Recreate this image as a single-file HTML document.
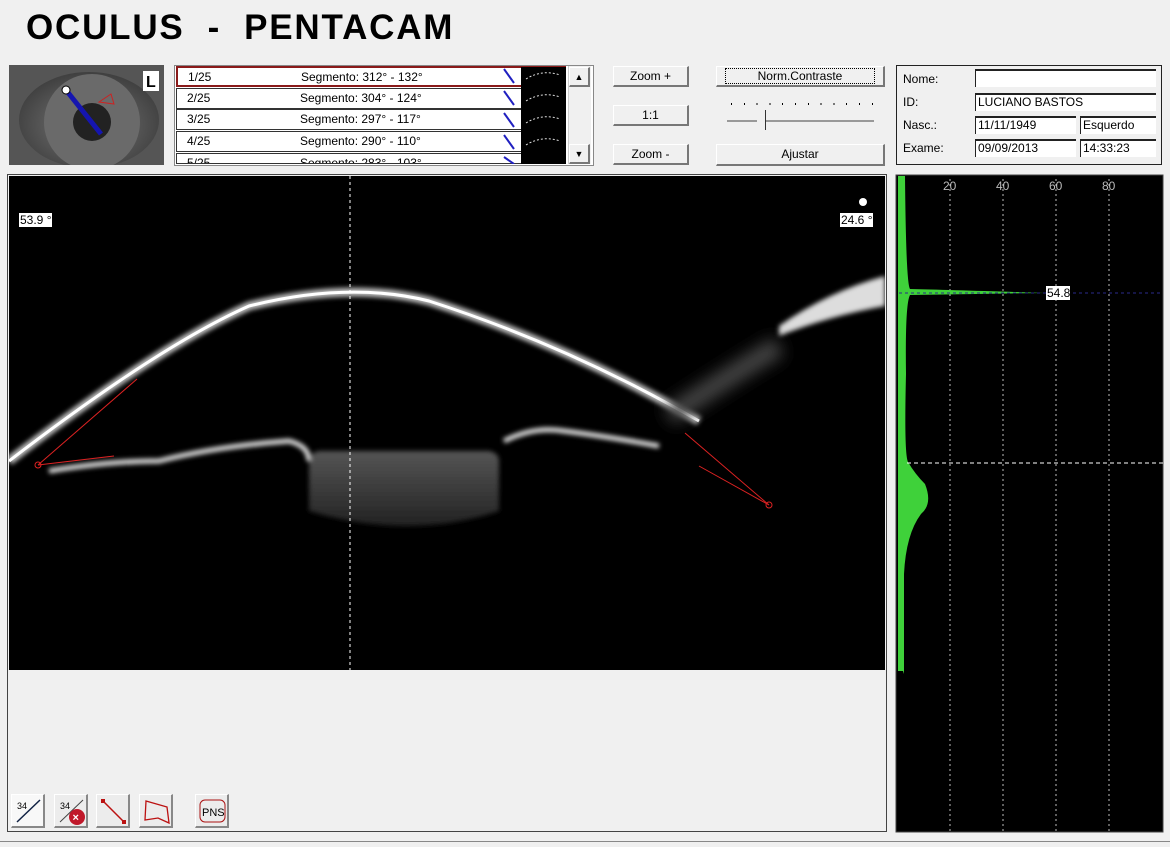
<!DOCTYPE html><html><head><style>
body{margin:0;width:1170px;height:847px;background:#f0f0f0;position:relative;overflow:hidden;font-family:"Liberation Sans",sans-serif;}
.a{position:absolute}
.btn{position:absolute;background:#f0f0f0;border:1px solid #fff;border-right:2px solid #777;border-bottom:2px solid #777;font-size:12px;text-align:center;box-sizing:border-box;line-height:18px;color:#000}
.row{position:absolute;left:176px;width:390px;height:21px;background:#fff;border:1px solid #333;box-sizing:border-box;font-size:12px;line-height:19px}
.row span{position:absolute}
.lbl{position:absolute;font-size:12px}
.fld{position:absolute;background:#fff;border-top:2px solid #222;border-left:1px solid #222;box-sizing:border-box;font-size:12px;line-height:15px;padding-left:2px;height:18px}
.ib{position:absolute;top:794px;width:34px;height:34px;background:#ececec;border:1px solid #fff;border-right:2px solid #888;border-bottom:2px solid #888;box-sizing:border-box}
</style></head><body>
<div class="a" style="left:26px;top:8px;font-size:35px;font-weight:bold;letter-spacing:1.8px">OCULUS&nbsp;&nbsp;-&nbsp;&nbsp;PENTACAM</div>
<!-- eye thumb -->
<svg class="a" style="left:9px;top:65px" width="155" height="100"><defs><radialGradient id="e" cx="0.5" cy="0.55" r="0.6"><stop offset="0" stop-color="#7a7a7a"/><stop offset="1" stop-color="#3a3a3a"/></radialGradient></defs>
<rect width="155" height="100" fill="#555"/><ellipse cx="80" cy="55" rx="70" ry="48" fill="url(#e)"/><circle cx="83" cy="57" r="48" fill="#6a6a6a"/><circle cx="83" cy="57" r="19" fill="#222"/>
<line x1="57" y1="25" x2="92" y2="69" stroke="#1515b0" stroke-width="5"/><circle cx="57" cy="25" r="4" fill="#fff" stroke="#000"/><path d="M90 37 l12 -8 l3 10 z" fill="none" stroke="#c22"/>
<rect x="134" y="6" width="16" height="20" fill="#fff"/><text x="137" y="22" font-size="16" font-weight="bold" font-family="Liberation Sans">L</text></svg>
<!-- list -->
<div class="a" style="left:174px;top:65px;width:418px;height:99px;background:#fff;border:1px solid #888;overflow:hidden"></div>
<div class="row" style="top:66px;border:2px solid #8a1a1a"><span style="left:10px">1/25</span><span style="left:123px">Segmento: 312° - 132°</span></div>
<div class="row" style="top:88px"><span style="left:10px">2/25</span><span style="left:123px">Segmento: 304° - 124°</span></div>
<div class="row" style="top:109px"><span style="left:10px">3/25</span><span style="left:123px">Segmento: 297° - 117°</span></div>
<div class="row" style="top:131px"><span style="left:10px">4/25</span><span style="left:123px">Segmento: 290° - 110°</span></div>
<div class="row" style="top:153px;height:11px;overflow:hidden"><span style="left:10px">5/25</span><span style="left:123px">Segmento: 283° - 103°</span></div>
<div class="a" style="left:521px;top:67px;width:45px;height:97px;background:#000"></div>
<svg class="a" style="left:500px;top:67px" width="66" height="97"><g stroke="#2020c0" stroke-width="2"><line x1="4" y1="2" x2="14" y2="16"/><line x1="4" y1="24" x2="14" y2="38"/><line x1="4" y1="46" x2="14" y2="60"/><line x1="4" y1="68" x2="14" y2="82"/><line x1="4" y1="90" x2="14" y2="97"/></g><g stroke="#ddd" fill="none" stroke-dasharray="2 2"><path d="M26 12 q16 -10 34 -4"/><path d="M26 34 q16 -10 34 -4"/><path d="M26 56 q16 -10 34 -4"/><path d="M26 78 q16 -10 34 -4"/></g></svg>
<div class="a" style="left:568px;top:66px;width:22px;height:98px;background:#f0f0f0;border-left:1px solid #ccc"></div>
<div class="btn" style="left:569px;top:67px;width:21px;height:20px;font-size:9px">▲</div>
<div class="btn" style="left:569px;top:144px;width:21px;height:20px;font-size:9px">▼</div>
<!-- buttons -->
<div class="btn" style="left:613px;top:66px;width:76px;height:21px">Zoom +</div>
<div class="btn" style="left:613px;top:105px;width:76px;height:21px">1:1</div>
<div class="btn" style="left:613px;top:144px;width:76px;height:21px">Zoom -</div>
<div class="btn" style="left:716px;top:66px;width:169px;height:21px"><span style="border:1px dotted #000;padding:0 30px;line-height:14px;display:inline-block;margin-top:1px;width:150px;box-sizing:border-box">Norm.Contraste</span></div>
<div class="btn" style="left:716px;top:144px;width:169px;height:22px">Ajustar</div>
<div class="a" style="left:731px;top:103px;width:142px;height:2px;background:repeating-linear-gradient(90deg,#000 0 1px,transparent 1px 12.8px)"></div>
<div class="a" style="left:727px;top:120px;width:147px;height:2px;background:#999"></div>
<div class="a" style="left:757px;top:110px;width:8px;height:20px;background:#f0f0f0;border-right:1px solid #333"></div>
<!-- patient box -->
<div class="a" style="left:896px;top:65px;width:266px;height:100px;border:1px solid #222;box-sizing:border-box"></div>
<div class="lbl" style="left:903px;top:72px">Nome:</div><div class="fld" style="left:975px;top:69px;width:181px"></div>
<div class="lbl" style="left:903px;top:95px">ID:</div><div class="fld" style="left:975px;top:93px;width:181px">LUCIANO BASTOS</div>
<div class="lbl" style="left:903px;top:118px">Nasc.:</div><div class="fld" style="left:975px;top:116px;width:101px">11/11/1949</div><div class="fld" style="left:1080px;top:116px;width:76px">Esquerdo</div>
<div class="lbl" style="left:903px;top:141px">Exame:</div><div class="fld" style="left:975px;top:139px;width:101px">09/09/2013</div><div class="fld" style="left:1080px;top:139px;width:76px">14:33:23</div>
<!-- main image -->
<div class="a" style="left:7px;top:174px;width:880px;height:658px;border:1px solid #444;box-sizing:border-box;background:#f0f0f0"></div>
<svg class="a" style="left:9px;top:176px" width="876" height="494"><defs><filter id="b" x="-50%" y="-50%" width="200%" height="200%"><feGaussianBlur stdDeviation="2.5"/></filter><filter id="b2" x="-50%" y="-50%" width="200%" height="200%"><feGaussianBlur stdDeviation="8"/></filter><linearGradient id="lg" x1="0" y1="0" x2="0" y2="1"><stop offset="0" stop-color="#555"/><stop offset="1" stop-color="#222"/></linearGradient></defs>
<rect width="876" height="494" fill="#000"/>
<path d="M300 285 q0 -8 10 -10 h170 q10 2 10 10 v50 q-90 30 -190 0 z" fill="url(#lg)" filter="url(#b)"/>
<path d="M0 285 Q150 170 240 130 Q340 105 420 125 Q560 170 690 245" fill="none" stroke="#bbb" stroke-width="9" filter="url(#b)"/>
<path d="M0 285 Q150 170 240 130 Q340 105 420 125 Q560 170 690 245" fill="none" stroke="#fff" stroke-width="3"/>
<path d="M770 150 Q820 115 876 100 v30 Q820 140 770 160z" fill="#ddd" filter="url(#b)"/>
<path d="M660 240 Q720 200 770 170" stroke="#444" stroke-width="20" fill="none" filter="url(#b2)"/>
<path d="M40 295 q60 -10 110 -10 q60 -15 130 -20 q20 5 20 20" stroke="#ddd" stroke-width="5" fill="none" filter="url(#b)"/>
<path d="M495 265 q30 -15 60 -10 q40 5 95 15" stroke="#ddd" stroke-width="5" fill="none" filter="url(#b)"/>
<g stroke="#d22" fill="none" stroke-width="1"><line x1="29" y1="289" x2="128" y2="203"/><line x1="29" y1="289" x2="105" y2="280"/><circle cx="29" cy="289" r="3"/><line x1="676" y1="257" x2="760" y2="329"/><line x1="690" y1="290" x2="760" y2="329"/><circle cx="760" cy="329" r="3"/></g>
<line x1="341" y1="0" x2="341" y2="494" stroke="#fff" stroke-dasharray="3 3"/>
<rect x="10" y="37" width="33" height="14" fill="#fff"/><text x="11" y="48" font-size="12" font-family="Liberation Sans">53.9 °</text>
<rect x="831" y="37" width="33" height="14" fill="#fff"/><text x="832" y="48" font-size="12" font-family="Liberation Sans">24.6 °</text>
<circle cx="854" cy="26" r="4" fill="#fff"/></svg>
<!-- bottom icons -->
<div class="ib" style="left:11px;background:#f8f8f8"><svg width="32" height="32"><line x1="5" y1="27" x2="28" y2="5" stroke="#124" stroke-width="1.5"/><text x="5" y="14" font-size="9">34</text></svg></div>
<div class="ib" style="left:54px"><svg width="32" height="32"><line x1="5" y1="27" x2="28" y2="5" stroke="#444"/><text x="5" y="14" font-size="9">34</text><circle cx="22" cy="22" r="8" fill="#c0182a"/><text x="17.5" y="26" font-size="11" fill="#fff" font-weight="bold">×</text></svg></div>
<div class="ib" style="left:96px"><svg width="32" height="32"><line x1="6" y1="6" x2="27" y2="27" stroke="#b11" stroke-width="1.5"/><rect x="4" y="4" width="4" height="4" fill="#b11"/><rect x="25" y="25" width="4" height="4" fill="#b11"/></svg></div>
<div class="ib" style="left:139px"><svg width="32" height="32"><path d="M6 6 L27 12 L29 28 L18 23 L5 25 Z" fill="none" stroke="#b11" stroke-width="1.3"/></svg></div>
<div class="ib" style="left:195px"><svg width="32" height="32"><rect x="4" y="5" width="25" height="22" rx="5" fill="none" stroke="#a11"/><text x="6" y="21" font-size="11" font-family="Liberation Sans">PNS</text></svg></div>
<!-- right panel -->
<svg class="a" style="left:895px;top:174px" width="270" height="659"><rect x="0" y="0" width="270" height="659" fill="#f0f0f0"/><rect x="1" y="1" width="267" height="657" fill="#000" stroke="#444"/>
<g stroke="#bbb" stroke-dasharray="2 3"><line x1="55" y1="5" x2="55" y2="657"/><line x1="108" y1="5" x2="108" y2="657"/><line x1="161" y1="5" x2="161" y2="657"/><line x1="214" y1="5" x2="214" y2="657"/></g>
<g fill="#bbb" font-size="12" font-family="Liberation Sans"><text x="48" y="16">20</text><text x="101" y="16">40</text><text x="154" y="16">60</text><text x="207" y="16">80</text></g>
<path d="M3 2 H10 Q11 110 15 115 Q60 116 150 119 L15 121 Q10 130 11 200 Q9 280 13 288 Q20 300 30 310 Q38 330 26 340 Q11 360 9 400 L9 500 L8 497 H3 Z" fill="#3fd13a"/>
<line x1="4" y1="119" x2="268" y2="119" stroke="#2a2a8a" stroke-dasharray="3 3"/>
<line x1="12" y1="289" x2="268" y2="289" stroke="#fff" stroke-dasharray="4 3"/>
<rect x="151" y="112" width="24" height="14" fill="#fff"/><text x="152" y="123" font-size="12" font-family="Liberation Sans">54.8</text></svg>
<div class="a" style="left:0;top:841px;width:1170px;height:1px;background:#888"></div>
</body></html>
